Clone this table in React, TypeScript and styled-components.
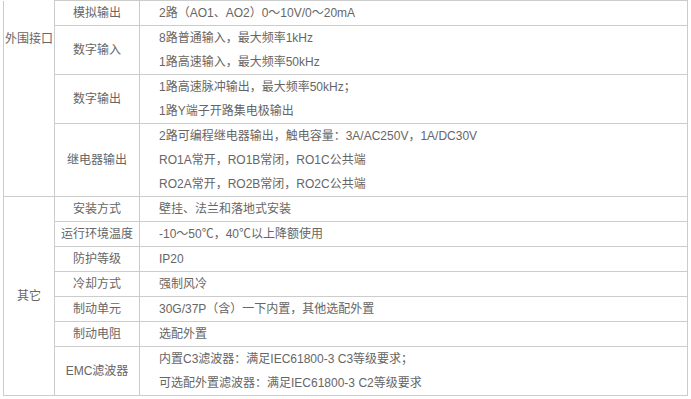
import React from 'react';
import styled, {createGlobalStyle} from 'styled-components';

type Spec = {name: string; lines: string[]};
type Group = {label: string; offsetTop?: number; rows: Spec[]};

const groups: Group[] = [
    {
        label: '外围接口',
        offsetTop: 26,
        rows: [
            {name: '模拟输出', lines: ['2路（AO1、AO2）0～10V/0～20mA']},
            {name: '数字输入', lines: ['8路普通输入，最大频率1kHz', '1路高速输入，最大频率50kHz']},
            {name: '数字输出', lines: ['1路高速脉冲输出，最大频率50kHz；', '1路Y端子开路集电极输出']},
            {
                name: '继电器输出',
                lines: [
                    '2路可编程继电器输出，触电容量：3A/AC250V，1A/DC30V',
                    'RO1A常开，RO1B常闭，RO1C公共端',
                    'RO2A常开，RO2B常闭，RO2C公共端',
                ],
            },
        ],
    },
    {
        label: '其它',
        rows: [
            {name: '安装方式', lines: ['壁挂、法兰和落地式安装']},
            {name: '运行环境温度', lines: ['-10～50℃，40℃以上降额使用']},
            {name: '防护等级', lines: ['IP20']},
            {name: '冷却方式', lines: ['强制风冷']},
            {name: '制动单元', lines: ['30G/37P（含）一下内置，其他选配外置']},
            {name: '制动电阻', lines: ['选配外置']},
            {name: 'EMC滤波器', lines: ['内置C3滤波器：满足IEC61800-3 C3等级要求；', '可选配外置滤波器：满足IEC61800-3 C2等级要求']},
        ],
    },
];

const SpecTable: React.FunctionComponent = () => {
    return (
        <Table>
            <colgroup>
                <col style={{width: 51}}/>
                <col style={{width: 85}}/>
                <col/>
            </colgroup>
            <tbody>
                {groups.map((group, gi) =>
                    group.rows.map((row, ri) => (
                        <tr key={`${gi}-${ri}`}>
                            {ri === 0 && (
                                <GroupCell rowSpan={group.rows.length} $offsetTop={group.offsetTop} $open={gi === 0}>
                                    {group.label}
                                </GroupCell>
                            )}
                            <NameCell>{row.name}</NameCell>
                            <ValueCell>
                                {row.lines.map((line, li) => (
                                    <Line key={li}>{line}</Line>
                                ))}
                            </ValueCell>
                        </tr>
                    ))
                )}
            </tbody>
        </Table>
    );
};

const App: React.FunctionComponent = () => {
    return (
        <>
            <GlobalStyle/>
            <Page>
                <SpecTable/>
            </Page>
        </>
    );
};

const GlobalStyle = createGlobalStyle`
    html, body {
        margin:0;
        padding:0;
        background:#ffffff;
    }
    body {
        font-family:"Liberation Sans", "Noto Sans CJK SC", sans-serif;
        font-size:12px;
        color:#666666;
    }
`;

const Page = styled.div`
    padding-left:3px;
`;

const Table = styled.table`
    width:685px;
    table-layout:fixed;
    border-collapse:collapse;
    border-spacing:0;
    td {
        border:1px solid #cccccc;
        padding:0;
        line-height:24px;
        font-size:12px;
        color:#666666;
    }
`;

const GroupCell = styled.td<{$offsetTop?: number; $open?: boolean}>`
    text-align:center;
    vertical-align:${p => (p.$offsetTop ? 'top' : 'middle')};
    padding-top:${p => (p.$offsetTop ? `${p.$offsetTop}px` : '0')} !important;
    border-top:${p => (p.$open ? 'none' : '1px solid #cccccc')} !important;
`;

const NameCell = styled.td`
    text-align:center;
    vertical-align:middle;
`;

const ValueCell = styled.td`
    text-align:left;
    vertical-align:middle;
    padding-left:19px !important;
`;

const Line = styled.div`
    height:24px;
    line-height:24px;
    white-space:nowrap;
`;

export default App;
